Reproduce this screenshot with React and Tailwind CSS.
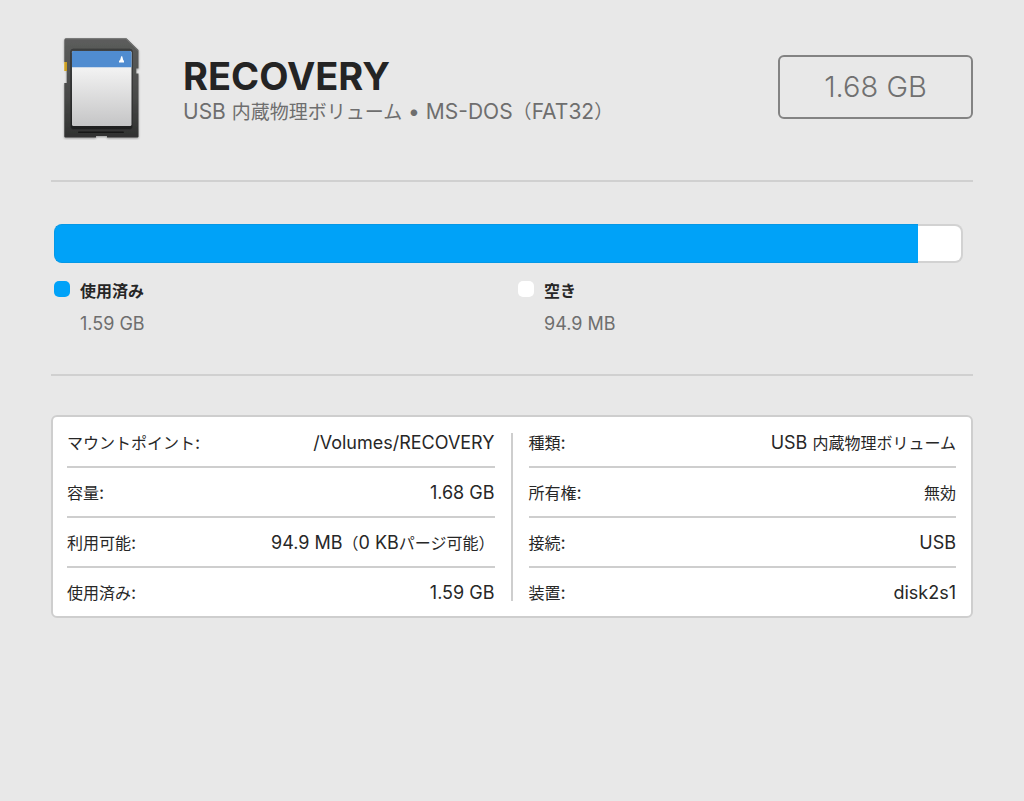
import React from "react";

const leftRows = [
  ["マウントポイント:", "/Volumes/RECOVERY"],
  ["容量:", "1.68 GB"],
  ["利用可能:", "94.9 MB（0 KBパージ可能）"],
  ["使用済み:", "1.59 GB"],
];

const rightRows = [
  ["種類:", "USB 内蔵物理ボリューム"],
  ["所有権:", "無効"],
  ["接続:", "USB"],
  ["装置:", "disk2s1"],
];

function SdCardIcon() {
  return (
    <svg className="h-[104px] w-20 shrink-0" viewBox="0 0 80 104" aria-hidden="true">
      <defs>
        <linearGradient id="body" x1="0" y1="0" x2="0" y2="1">
          <stop offset="0" stopColor="#5c5d5c" />
          <stop offset="0.55" stopColor="#4a4b4a" />
          <stop offset="1" stopColor="#303130" />
        </linearGradient>
        <linearGradient id="well" x1="0" y1="0" x2="0" y2="1">
          <stop offset="0" stopColor="#414344" />
          <stop offset="1" stopColor="#1e1f1f" />
        </linearGradient>
        <linearGradient id="paper" x1="0" y1="0" x2="0" y2="1">
          <stop offset="0" stopColor="#f6f6f6" />
          <stop offset="0.25" stopColor="#f1f1f1" />
          <stop offset="1" stopColor="#c5c5c6" />
        </linearGradient>
        <filter id="shade" x="-10%" y="-10%" width="120%" height="120%">
          <feDropShadow dx="0" dy="1" stdDeviation="0.8" floodColor="#000" floodOpacity="0.35" />
        </filter>
      </defs>
      <path
        d="M5 2.300H65.500L77.500 14V32.500H75.300V37.500H77.500V100.500Q77.500 101.500 76.500 101.500H46V100H35V101.500H4.300Q3.300 101.500 3.300 100.500V47H5.700V35H5.200V26H3.300V4Q3.300 2.300 5 2.300Z"
        fill="url(#body)"
        filter="url(#shade)"
      />
      <path d="M3 26H6V35H3Z" fill="#c99d22" />
      <path d="M3 26H4.200V35H3Z" fill="#dcb64c" />
      <path d="M4.500 2.800H65L77 14.500" fill="none" stroke="#7b7b7b" strokeWidth="0.8" />
      <rect x="9.500" y="13" width="62" height="80.500" rx="3" fill="url(#well)" stroke="#333" strokeWidth="0.6" />
      <rect x="11" y="15" width="59.500" height="75" rx="1.500" fill="url(#paper)" />
      <path d="M12.500 15H69Q70.500 15 70.500 16.500V31.300H11V16.500Q11 15 12.500 15Z" fill="#508cd0" />
      <path d="M60.200 20.300H61.200L62.400 24.500H63V26.500H58V24.500H59Z" fill="#fff" />
      <rect x="17" y="95.500" width="46" height="1.600" rx="0.800" fill="#171717" />
    </svg>
  );
}

const japanese = /([\u3000-\u30ff\u4e00-\u9fff\uff00-\uffef]+)/;

/* Sets runs of Japanese characters slightly smaller than the Latin text around them. */
function Mixed({ text, kanji }) {
  return text
    .split(japanese)
    .filter(Boolean)
    .map((part, i) =>
      japanese.test(part) ? (
        <span key={i} className={kanji}>
          {part}
        </span>
      ) : (
        part
      )
    );
}

function InfoList({ rows }) {
  return (
    <dl className="min-w-0 flex-1 text-[18px] leading-6 text-[#272727]">
      {rows.map(([label, value], i) => (
        <div
          key={label}
          className={
            "flex items-center justify-between pt-0.5 whitespace-nowrap " +
            (i < rows.length - 1 ? "h-[50px] border-b-2 border-[#cecece]" : "h-12")
          }
        >
          <dt>
            <Mixed text={label} kanji="text-[16px]" />
          </dt>
          <dd>
            <Mixed text={value} kanji="text-[16px]" />
          </dd>
        </div>
      ))}
    </dl>
  );
}

function Legend({ swatch, name, size }) {
  return (
    <div className="flex flex-1 gap-2.5">
      <span className={"mt-0.5 size-4 shrink-0 rounded-[5px] " + swatch} />
      <div>
        <h2 className="text-[16px] leading-6 font-bold text-[#262626]">{name}</h2>
        <p className="mt-[9px] text-[18px] leading-6 text-[#6e6e6e]">{size}</p>
      </div>
    </div>
  );
}

export default function App() {
  return (
    <main
      lang="ja"
      className="min-h-screen bg-[#e8e8e8] px-[51px] pt-9 pb-12 font-['Inter','Noto_Sans_CJK_JP',sans-serif]"
    >
      <header className="flex items-start border-b-2 border-[#d0d0d0] pb-10 pl-2.5">
        <SdCardIcon />
        <div className="ml-[42px] flex-1 pt-[18px] whitespace-nowrap">
          <h1 className="text-[38px] leading-[44px] font-bold text-[#242424]">RECOVERY</h1>
          <p className="text-[21px] leading-7 text-[#6e6e6e]">
            <Mixed text="USB 内蔵物理ボリューム • MS-DOS（FAT32）" kanji="text-[19px]" />
          </p>
        </div>
        <div className="mt-[19px] flex h-16 w-[195px] items-center justify-center rounded-md border-2 border-[#838383] text-[29px] font-light text-[#707070]">
          1.68 GB
        </div>
      </header>

      <section className="border-b-2 border-[#d0d0d0] pt-[42px] pr-2.5 pb-[38px] pl-[3px]">
        <div className="flex h-[39px]">
          <div className="w-[95%] rounded-l-lg border-y border-l border-[#0598e6] bg-[#00a2f8]" />
          <div className="flex-1 rounded-r-lg border-y-2 border-r-2 border-[#d2d2d2] bg-white" />
        </div>
        <div className="mt-4 flex gap-[19px]">
          <Legend swatch="bg-[#00a2f8]" name="使用済み" size="1.59 GB" />
          <Legend swatch="bg-white" name="空き" size="94.9 MB" />
        </div>
      </section>

      <section className="mt-[39px] flex rounded-md border-2 border-[#cecece] bg-white pt-px pr-[15px] pl-3.5">
        <InfoList rows={leftRows} />
        <div className="mx-4 my-[15px] w-0.5 bg-[#cecece]" />
        <InfoList rows={rightRows} />
      </section>
    </main>
  );
}
